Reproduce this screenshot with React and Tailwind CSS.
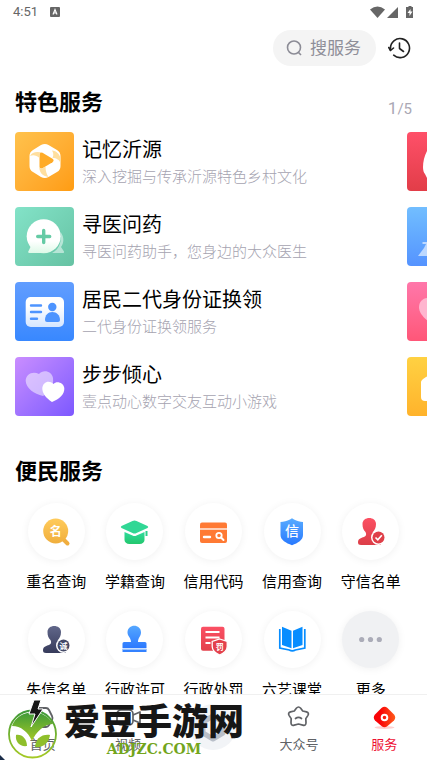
import React, { useState } from 'react'

const PlayTile = () => (
    <svg viewBox="0 0 59 59" className="w-full h-full">
        <path d="M26 13q4-2.200 7.500 0l8.500 5q3.500 2 3.500 6v10q0 4-3.500 6l-8.500 5q-3.500 2-7.500 0l-8-5q-3.500-2-3.500-6V24q0-4 3.500-6z" fill="#fff" />
        <path d="M24.500 22.500q0-3 3-1.700l10 6q2.200 1.700 0 3.400l-10 6q-3 1.200-3-1.700z" fill="#ffab27" />
        <path d="M15 24c2-4 7-5 13-3-2-.5-3.500 0-3.500 2v3c-3-2.500-6-3.500-9.500-2z" fill="#ffdf9f" />
        <path d="M37.500 26c4 0 7 2 8 5v-5c-1-4-4-7-8.500-7.500 1.500 2 1.800 5 .5 7.500z" fill="#ffdf9f" />
        <path d="M24.500 34q0 3.500 3 2.300l3-1.800c0 4 1 8 3 10.500-6-1-10-5-9-11z" fill="#ffdf9f" />
    </svg>
)

const MedicTile = () => (
    <svg viewBox="0 0 59 59" className="w-full h-full">
        <defs>
            <linearGradient id="medic" gradientUnits="userSpaceOnUse" x1="0" y1="34" x2="0" y2="47">
                <stop stopColor="#fff" />
                <stop offset="1" stopColor="#dbf9e6" />
            </linearGradient>
        </defs>
        <path d="M45.500 25c4 5 3.500 11 .5 15l3 4.500q.5 1.500-1 1.500H37c8-4 10-13 8.500-21z" fill="#fff" opacity=".5" />
        <path d="M14.500 46q-1.800 0-1.200-1.500L17 37l12 9z" fill="url(#medic)" />
        <circle cx="28.700" cy="29.200" r="17" fill="url(#medic)" />
        <path d="M28.700 23.500v12M22.700 29.500h12" stroke="#65cba5" strokeWidth="3.400" strokeLinecap="round" />
    </svg>
)

const IdCardTile = () => (
    <svg viewBox="0 0 59 59" className="w-full h-full">
        <defs>
            <linearGradient id="idcard" x1="0" y1="0" x2="0" y2="1">
                <stop offset="0.3" stopColor="#fff" />
                <stop offset="1" stopColor="#d5e6ff" />
            </linearGradient>
        </defs>
        <rect x="10.700" y="15" width="38.300" height="30" rx="5" fill="url(#idcard)" />
        <path d="M16 23.500h10M16 30h10M16 36.700h6" stroke="#4d94ff" strokeWidth="2.400" strokeLinecap="round" />
        <circle cx="37.300" cy="25" r="4.200" fill="#4d94ff" />
        <path d="M30 38c0-5 3-8 7.300-8s7.700 3 7.700 8q0 2-2 2H32q-2 0-2-2z" fill="#4d94ff" />
    </svg>
)

const HeartsTile = () => (
    <svg viewBox="0 0 59 59" className="w-full h-full">
        <path d="M24 17c4-5 13-3 14 4 1 8-3 14-10 18-9-2-17-8-17.300-15C10.500 17 18 13.500 24 17z" fill="#fff" opacity=".5" />
        <path d="M38.500 27c3-3.500 10-1.500 10.800 4 .5 6.500-5 11-12.300 14-6-4-10-9-9.700-14C28 25 34 22.500 38.500 27z" fill="#fff" />
    </svg>
)

const FEATURED = [
    { title: '记忆沂源', desc: '深入挖掘与传承沂源特色乡村文化', bg: 'bg-linear-to-br from-[#ffc24c] to-[#ff9c10]', art: <PlayTile /> },
    { title: '寻医问药', desc: '寻医问药助手，您身边的大众医生', bg: 'bg-linear-to-br from-[#83e3c8] to-[#66c2a3]', art: <MedicTile /> },
    { title: '居民二代身份证换领', desc: '二代身份证换领服务', bg: 'bg-linear-to-b from-[#619dff] to-[#3888ff]', art: <IdCardTile /> },
    { title: '步步倾心', desc: '壹点动心数字交友互动小游戏', bg: 'bg-linear-to-br from-[#ca8dff] to-[#7d57ff]', art: <HeartsTile /> },
]

// second page of the carousel, only its left edge peeks in
const NEXT_PAGE = [
    { bg: 'bg-linear-to-b from-[#ff5069] to-[#e23d48]', d: 'M29 10C20 14 16 26 16 35q0 5 2 7l2 4h18V20z', fill: '#fff' },
    { bg: 'bg-linear-to-b from-[#72beff] to-[#5593ff]', d: 'M15.500 35h8v14H11l6-8 2-4h-3.500z', fill: '#bcd8ff' },
    { bg: 'bg-linear-to-b from-[#ff77aa] to-[#ff5678]', d: 'M26 17c-6-3-14 0-14 8 0 7 6 12 14 18l14-10z', fill: '#ffb5cf' },
    { bg: 'bg-linear-to-b from-[#ffd142] to-[#ffb32b]', d: 'M19 20l10-6 15 10v20H18q-4 0-4-4V25q0-2 5-5z', fill: '#fff' },
]

const Gradient = ({ id, from, to }) => (
    <defs>
        <linearGradient id={id} x1="0" y1="0" x2="0" y2="1">
            <stop stopColor={from} />
            <stop offset="1" stopColor={to} />
        </linearGradient>
    </defs>
)

const PERSON = 'M19.500 21c0-8 13.500-8 13.500 0 0 4-1.500 6-3 8-.5 3 0 4 2 5l6 3v5H18q-3 0-3-2.500c0-4 3-4.500 6-5.500 2.500-1 2.500-3 1.500-5-2-2-3-4-3-8z'

const SERVICES = [
    {
        label: '重名查询',
        icon: <>
            <Gradient id="g1" from="#ffcb5b" to="#f0ae3c" />
            <path d="M35 36l4.500 4.500" stroke="#f0ae40" strokeWidth="4" strokeLinecap="round" />
            <circle cx="27.700" cy="28" r="12.500" fill="url(#g1)" />
            <text x="27.700" y="32.500" fontSize="12" fontWeight="700" fill="#fff" textAnchor="middle">名</text>
        </>
    },
    {
        label: '学籍查询',
        icon: <>
            <Gradient id="g2" from="#2edb9c" to="#23c76d" />
            <path d="M26.500 18q2-1 4 0l11 5q1.500 1 0 2l-11 5q-2 1-4 0l-11-5q-1.500-1 0-2z" fill="#31d795" />
            <path d="M18.500 29l8 3.500q2 1 4 0l8-3.500v8c0 2-2 4-5 4h-10c-3 0-5-2-5-4z" fill="url(#g2)" />
            <path d="M40.500 28v5" stroke="#2bd08a" strokeWidth="2" />
        </>
    },
    {
        label: '信用代码',
        icon: <>
            <rect x="15" y="19.500" width="27" height="20.500" rx="2" fill="#ff7a34" />
            <path d="M15 26h27" stroke="#fff" strokeWidth="1.300" />
            <path d="M19 34h6" stroke="#fff" strokeWidth="2.400" strokeLinecap="round" />
            <circle cx="34" cy="32.500" r="2.700" fill="none" stroke="#fff" strokeWidth="1.800" />
            <path d="M36 34.500l2.500 2.500" stroke="#fff" strokeWidth="2" strokeLinecap="round" />
        </>
    },
    {
        label: '信用查询',
        icon: <>
            <Gradient id="g4" from="#58abff" to="#2879ff" />
            <path d="M28 15.300l2 1.200c3 1.800 6 2 9 2.500v13c0 5-5 8-11 10.200C22 40 16.500 37 16.500 32V19c3-.5 6.500-.7 9.500-2.500z" fill="url(#g4)" />
            <text x="28" y="33" fontSize="14" fontWeight="500" fill="#fff" textAnchor="middle">信</text>
        </>
    },
    {
        label: '守信名单',
        icon: <>
            <Gradient id="g5" from="#fc5063" to="#dc3e48" />
            <path d={PERSON} transform="translate(1 0)" fill="url(#g5)" />
            <circle cx="36.500" cy="34.500" r="7.500" fill="#fff" />
            <circle cx="36.500" cy="34.500" r="6" fill="#df3f49" />
            <path d="M33.500 34.500l2.300 2.300 4-4.500" fill="none" stroke="#fff" strokeWidth="1.600" />
        </>
    },
    {
        label: '失信名单',
        icon: <>
            <Gradient id="g6" from="#61678a" to="#373b5b" />
            <path d={PERSON} fill="url(#g6)" />
            <circle cx="35.500" cy="34.500" r="7.500" fill="#fff" />
            <circle cx="35.500" cy="34.500" r="6" fill="#444967" />
            <text x="35.500" y="37.500" fontSize="8" fontWeight="700" fill="#fff" textAnchor="middle">诚</text>
        </>
    },
    {
        label: '行政许可',
        icon: <>
            <Gradient id="g7" from="#55a7ff" to="#2c79ff" />
            <path d="M21.500 21.500c0-9 13.500-9 13.500 0 0 4-3 5-3 9.500h7q1.500 0 1.500 1.500V37h-24v-4.500q0-1.500 1.500-1.500h7c0-4.500-3.500-5.500-3.500-9.500z" fill="url(#g7)" />
            <path d="M16.500 38h24v3h-24z" fill="#3482ff" />
            <path d="M16.500 38h24" stroke="#b9d6ff" strokeWidth="1.500" />
        </>
    },
    {
        label: '行政处罚',
        icon: <>
            <Gradient id="g8" from="#fb5064" to="#e3414c" />
            <rect x="16" y="15.700" width="23.500" height="24" rx="2" fill="url(#g8)" />
            <path d="M20.500 21h14M20.500 26.500h14M20.500 32h5" stroke="#fff" strokeWidth="1.800" />
            <path d="M34.700 28l7.500 2.500v5c0 4-3 6.500-7.500 8.500-4.500-2-7.500-4.500-7.500-8.500v-5z" fill="#e3414c" stroke="#fff" strokeWidth="1.300" />
            <text x="34.700" y="39" fontSize="8" fontWeight="700" fill="#fff" textAnchor="middle">罚</text>
        </>
    },
    {
        label: '六艺课堂',
        icon: <>
            <path d="M18 15.700l9.500 4v17.500L18 34zM38.500 15.700l-9.500 4v17.500l9.500-3.200z" fill="#078dff" />
            <path d="M15.800 18v19l9.500 2q3 1.800 6 0l9.500-2V18" fill="none" stroke="#078dff" strokeWidth="1.700" />
        </>
    },
    {
        label: '更多',
        more: true,
        icon: <>
            <circle cx="19.700" cy="28.500" r="2.600" fill="#abacb8" />
            <circle cx="28.500" cy="28.500" r="2.600" fill="#abacb8" />
            <circle cx="37.300" cy="28.500" r="2.600" fill="#abacb8" />
        </>
    },
]

const TABS = [
    {
        label: '首页',
        icon: <path d="M9 3h7q2 0 3 2l3 6q1 2 0 4l-3 5q-1 2-3 2H9q-2 0-3-2l-3-5q-1-2 0-4l3-6q1-2 3-2z" fill="none" stroke="#606266" strokeWidth="1.800" />
    },
    {
        label: '视频',
        icon: <g fill="none" stroke="#606266" strokeWidth="1.700" strokeLinejoin="round">
            <rect x="1" y="5" width="16" height="15" rx="4" />
            <path d="M17 10l7-3v11l-7-3" />
        </g>
    },
    { label: '' },
    {
        label: '大众号',
        icon: <g fill="none" stroke="#606266" strokeWidth="1.700" strokeLinecap="round" strokeLinejoin="round">
            <path d="M10.300 3.300q2.200-2.600 4.400 0l2 2.700 3.800.9q3 1 1.300 3.700l-2 3 .2 4q.1 3.400-3.200 2.500L12.500 19l-4.300 1.100q-3.300.9-3.200-2.500l.2-4-2-3q-1.700-2.700 1.300-3.700L8.300 6z" />
            <path d="M9.500 13.500q3-2.200 6 0" />
        </g>
    },
    {
        label: '服务',
        icon: <>
            <defs>
                <linearGradient id="tab" x1="0" y1="0" x2="1" y2="0">
                    <stop offset=".3" stopColor="#f90407" />
                    <stop offset="1" stopColor="#ff5a1a" />
                </linearGradient>
            </defs>
            <ellipse cx="12.500" cy="22.500" rx="10" ry="1.500" fill="#ffd0d0" />
            <path d="M9.500 3q3-2.500 6 0l6.500 6.500q2.500 3 0 6L15.500 21q-3 2.500-6 0L3 15.500q-2.500-3 0-6z" fill="url(#tab)" />
            <circle cx="12.500" cy="12.500" r="2.800" fill="none" stroke="#fff" strokeWidth="2" />
        </>
    },
]

const StatusBar = () => (
    <div className="flex items-center justify-between h-6 px-[13px] shrink-0 text-[#666]">
        <div className="flex items-center gap-3">
            <span className="text-[13px] leading-4">4:51</span>
            <svg viewBox="0 0 10 10" className="w-[10px] h-[10px]">
                <rect width="10" height="10" rx="1" fill="#666" />
                <path d="M3 7.500l2-5 2 5M3.700 6h2.600" fill="none" stroke="#fff" strokeWidth="1.200" />
            </svg>
        </div>
        <svg viewBox="0 0 44 14" className="w-11 h-[14px]" fill="#666">
            <path d="M0 4.500q7.500-6 15 0L7.500 13z" />
            <path d="M28 2v11H17z" />
            <path d="M37 2h1.500V1h3v1H43v11h-7V2z" />
            <path d="M40.500 4l-3 4h2v3l3-4.500h-2z" fill="#fff" />
        </svg>
    </div>
)

const Watermark = () => (
    <div className="absolute left-0 bottom-0 flex items-end pointer-events-none">
        <svg viewBox="0 0 60 60" className="w-[60px] h-[60px]">
            <defs>
                <linearGradient id="wm" x1="0" y1="0" x2="0" y2="1">
                    <stop stopColor="#3e9a38" />
                    <stop offset="1" stopColor="#a5c925" />
                </linearGradient>
            </defs>
            <circle cx="32.500" cy="34" r="23.500" fill="none" stroke="url(#wm)" strokeWidth="1.800" />
            <path d="M12 26C18 9 44 7 53 24c-9 0-17 8-21 17-4-9-11-15-20-15z" fill="url(#wm)" />
            <path d="M16 35c6-1 11 4 11 11-7 1-12-4-11-11zM50 35c-9-1-14 4-15 12 8 1 14-4 15-12z" fill="#8fbf2b" />
            <path d="M34 0h7l-3 9h5L31 27l4-13h-6z" fill="#161616" stroke="#fff" strokeWidth="1" />
            <path d="M0 55l5 5H0z" fill="#1a2c48" />
        </svg>
        <div className="flex flex-col items-center pl-1 pb-[3px]">
            <span className="text-[36px] leading-9 font-black text-[#161616]">爱豆手游网</span>
            <span className="font-[DejaVu_Serif,serif] text-[14px] leading-4 font-bold text-[#73a51c]">ADJZC.COM</span>
        </div>
    </div>
)

const App = () => {

    const [ active, setActive ] = useState('服务')

    return (
        <div className="relative h-screen flex flex-col bg-white text-black overflow-hidden font-[Roboto,'Noto_Sans_CJK_SC',sans-serif]">
            <StatusBar />

            {/* Search */}
            <header className="flex items-center justify-end gap-3 pt-1.5 pr-[15px] shrink-0">
                <label className="flex items-center gap-2 h-9 w-[103px] rounded-full bg-[#f4f4f4] pl-[13px] pr-3">
                    <svg viewBox="0 0 16 16" className="w-4 h-4 shrink-0" fill="none" stroke="#8c8c96" strokeWidth="1.600">
                        <circle cx="8" cy="7.500" r="6.500" />
                        <path d="M12 12l3 3" />
                    </svg>
                    <input type="text" aria-label="搜服务" placeholder="搜服务" className="w-full min-w-0 bg-transparent outline-none text-[17px] leading-6 placeholder:text-[#8f8f99]" />
                </label>
                <button type="button" aria-label="历史记录">
                    <svg viewBox="0 0 24 22" className="w-6 h-[22px]" fill="none" stroke="#222" strokeWidth="1.600" strokeLinecap="round" strokeLinejoin="round">
                        <path d="M2.500 13V11a9.500 9.500 0 1 1 3.200 7.200" />
                        <path d="M0.800 10.500l1.700 3 3-2.500" />
                        <path d="M11.500 6v5.500l4 3" />
                    </svg>
                </button>
            </header>

            <main className="flex-1 min-h-0 overflow-hidden">
                {/* Featured services */}
                <section>
                    <div className="flex items-end justify-between px-[15px] pt-[21px]">
                        <h2 className="text-[22px] leading-8 font-bold">特色服务</h2>
                        <span className="text-[15px] leading-5 text-[#aaa8b4]"><span className="text-[17px]">1</span>/5</span>
                    </div>
                    <div className="flex pl-[15px] pt-[13px] overflow-hidden">
                        <ul className="flex flex-col gap-4 shrink-0 w-[calc(100%-20px)]">
                            {FEATURED.map((item) => (
                                <li key={item.title}>
                                    <a href="#" className="flex gap-2">
                                        <div className={`w-[59px] h-[59px] shrink-0 rounded-[4px] ${item.bg}`}>{item.art}</div>
                                        <div className="flex flex-col pt-1">
                                            <span className="text-[20px] leading-7">{item.title}</span>
                                            <span className="text-[15px] leading-[27px] font-light text-[#a5a3b0]">{item.desc}</span>
                                        </div>
                                    </a>
                                </li>
                            ))}
                        </ul>
                        <ul className="flex flex-col gap-4 shrink-0">
                            {NEXT_PAGE.map((item) => (
                                <li key={item.d} className={`w-[59px] h-[59px] rounded-[4px] ${item.bg}`}>
                                    <svg viewBox="0 0 59 59" className="w-full h-full"><path d={item.d} fill={item.fill} /></svg>
                                </li>
                            ))}
                        </ul>
                    </div>
                </section>

                {/* Public services */}
                <section>
                    <h2 className="px-[15px] pt-10 text-[22px] leading-8 font-bold">便民服务</h2>
                    <div className="grid grid-cols-5 gap-y-[17px] px-[17px] pt-[15px]">
                        {SERVICES.map((item) => (
                            <button key={item.label} type="button" className="flex flex-col items-center gap-2.5">
                                <span className={`w-[57px] h-[57px] rounded-full shadow-[0_1px_8px_rgba(0,0,0,0.06)] ${item.more ? 'bg-[#f0f1f3]' : 'bg-white'}`}>
                                    <svg viewBox="0 0 57 57" className="w-full h-full">{item.icon}</svg>
                                </span>
                                <span className="text-[15px] leading-6 whitespace-nowrap">{item.label}</span>
                            </button>
                        ))}
                    </div>
                </section>
            </main>

            {/* Bottom tabs */}
            <nav className="grid grid-cols-5 shrink-0 h-[66px] border-t border-[#f0f0f0] bg-white">
                {TABS.map((tab) => tab.label ? (
                    <button
                        key={tab.label}
                        type="button"
                        onClick={() => setActive(tab.label)}
                        className={`flex flex-col items-center pt-[10px] gap-[5px] ${active === tab.label ? 'text-[#ee1133]' : 'text-[#606266]'}`}>
                        <svg viewBox="0 0 25 25" className="w-[25px] h-[25px]">{tab.icon}</svg>
                        <span className="text-[13px] leading-5">{tab.label}</span>
                    </button>
                ) : (
                    <button key="center" type="button" aria-label="壹点" className="flex justify-center pt-[9px]">
                        <svg viewBox="0 0 46 46" className="w-[46px] h-[46px]">
                            <circle cx="23" cy="23" r="23" fill="#f2f4f7" />
                            <path d="M23 12l10 6v11l-10 6-10-6V18z" fill="none" stroke="#b9bfc9" strokeWidth="5" strokeLinejoin="round" />
                        </svg>
                    </button>
                ))}
            </nav>

            <Watermark />
        </div>
    )
}

export default App
